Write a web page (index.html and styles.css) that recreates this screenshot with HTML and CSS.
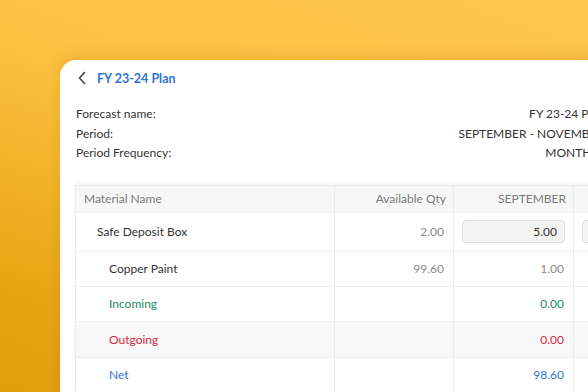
FILE: index.html
```html
<!DOCTYPE html>
<html lang="en">
<head>
    <meta charset="UTF-8">
    <title>FY 23-24 Plan</title>
    <link rel="stylesheet" href="styles.css">
</head>
<body>
    <div class="card">
        <header class="card-header">
            <svg class="back" width="10" height="14" viewBox="0 0 10 14">
                <path d="M7.5 1.5 L2.5 7 L7.5 12.5" fill="none" stroke="#444" stroke-width="1.6" stroke-linecap="round" stroke-linejoin="round"/>
            </svg>
            <h1>FY 23-24 Plan</h1>
        </header>

        <div class="details">
            <span class="label">Forecast name:</span><span class="value">FY 23-24 Plan</span>
            <span class="label">Period:</span><span class="value">SEPTEMBER - NOVEMBER</span>
            <span class="label">Period Frequency:</span><span class="value">MONTHLY</span>
        </div>

        <div class="table-wrap">
            <table class="plan">
                <thead>
                    <tr>
                        <th class="name-col">Material Name</th>
                        <th class="num">Available Qty</th>
                        <th class="num">SEPTEMBER</th>
                        <th class="num">OCTOBER</th>
                    </tr>
                </thead>
                <tbody>
                    <tr class="first">
                        <td class="lvl1">Safe Deposit Box</td>
                        <td class="num muted">2.00</td>
                        <td class="num"><div class="qty-input">5.00</div></td>
                        <td class="num"><div class="qty-input">5.00</div></td>
                    </tr>
                    <tr>
                        <td class="lvl2">Copper Paint</td>
                        <td class="num muted">99.60</td>
                        <td class="num muted">1.00</td>
                        <td class="num muted">1.00</td>
                    </tr>
                    <tr>
                        <td class="lvl2 incoming">Incoming</td>
                        <td></td>
                        <td class="num incoming">0.00</td>
                        <td class="num incoming">0.00</td>
                    </tr>
                    <tr class="shaded">
                        <td class="lvl2 outgoing">Outgoing</td>
                        <td></td>
                        <td class="num outgoing">0.00</td>
                        <td class="num outgoing">0.00</td>
                    </tr>
                    <tr>
                        <td class="lvl2 net">Net</td>
                        <td></td>
                        <td class="num net">98.60</td>
                        <td class="num net">97.60</td>
                    </tr>
                </tbody>
            </table>
        </div>
    </div>
</body>
</html>
```

FILE: styles.css
```css
html, body {
    margin: 0;
    height: 100%;
}
body {
    overflow: hidden;
    padding: 60px 0 0 60px;
    box-sizing: border-box;
    font-family: Lato, "Noto Sans", sans-serif;
    font-size: 12px;
    color: #333;
    background: linear-gradient(200deg, #fec84c 0%, #fdc242 40%, #e9a614 80%, #e09d0c 100%);
}
.card {
    width: 528px;
    height: 400px;
    padding: 0 16px;
    background: #fff;
    border-radius: 16px 0 0 0;
    box-shadow: 0 -4px 14px rgba(160, 100, 0, 0.18);
}
.card-header {
    display: flex;
    align-items: center;
    gap: 10px;
    height: 34px;
    padding-top: 1px;
}
.back {
    margin-left: 1px;
}
.card-header h1 {
    margin: 0;
    font-size: 12.5px;
    font-weight: 700;
    color: #2e74d6;
}
.details {
    display: grid;
    grid-template-columns: 1fr auto;
    row-gap: 1px;
    margin-top: 10px;
    line-height: 18.5px;
    font-size: 12px;
}
.details .value {
    text-align: right;
}
.table-wrap {
    margin-top: 22px;
    margin-left: -1px;
    border-top: 1px solid #eaeaea;
    box-shadow: 0 -2px 4px rgba(0, 0, 0, 0.04);
}
.plan {
    border-collapse: collapse;
    table-layout: fixed;
    width: 640px;
}
.plan th, .plan td {
    border-left: 1px solid #ececec;
    border-bottom: 1px solid #f0f0f0;
    padding: 0 8px;
    white-space: nowrap;
}
.plan th {
    height: 26px;
    background: #f7f7f7;
    font-weight: 400;
    color: #7a7a7a;
    text-align: left;
}
.plan th.name-col { width: 242px; }
.plan th:nth-child(2) { width: 103px; padding-right: 10px; }
.plan th:nth-child(3) { width: 104px; }
.plan td {
    height: 34px;
}
.plan .first td {
    height: 38px;
}
.plan .shaded td {
    height: 35px;
}
.plan .num {
    text-align: right;
    padding-right: 9px;
}
.plan th.num {
    padding-right: 7px;
}
.lvl1 { padding-left: 21px !important; }
.lvl2 { padding-left: 33px !important; }
.muted { color: #8a8a8a; }
.incoming { color: #1d8a5f; }
.outgoing { color: #d52a3b; }
.net { color: #2f74d8; }
.shaded td { background: #f8f8f8; }
.qty-input {
    height: 21px;
    line-height: 21px;
    margin-right: -1px;
    padding: 0 7px;
    border: 1px solid #dedede;
    border-radius: 4px;
    background: #f3f3f3;
    color: #333;
}
```
